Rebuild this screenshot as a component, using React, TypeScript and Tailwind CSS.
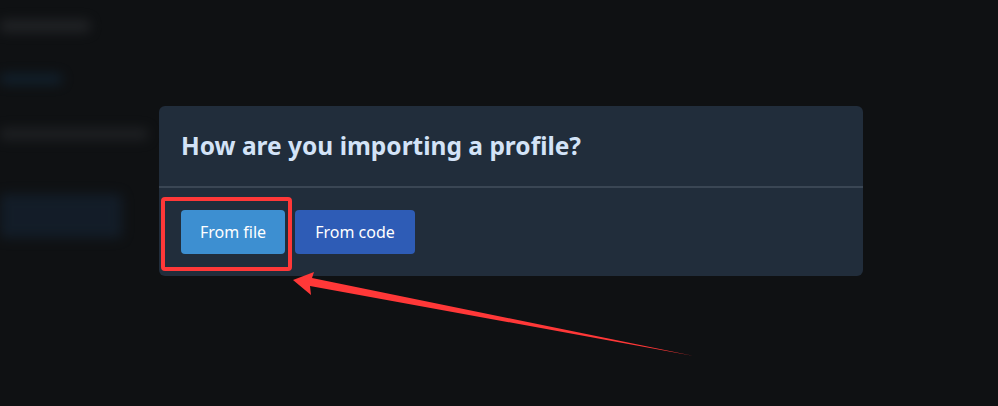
export default function App() {
    return (
        <div
            className="relative w-[998px] h-[406px] overflow-hidden bg-[#0f1113]"
            style={{ fontFamily: '"Noto Sans", "Open Sans", sans-serif' }}
        >
            {/* blurred page behind the modal */}
            <div className="flex flex-col items-start pt-[20px] blur-[6px] opacity-70">
                <div className="h-[12px] w-[90px] rounded bg-[#2a2c2f]" />
                <div className="mt-[42px] h-[10px] w-[62px] rounded bg-[#13283a]" />
                <div className="mt-[44px] h-[12px] w-[148px] rounded bg-[#25272a]" />
                <div className="mt-[54px] h-[44px] w-[122px] rounded bg-[#152231]" />
            </div>

            {/* modal */}
            <div className="absolute left-[159px] top-[106px] w-[704px] rounded-[6px] bg-[#212d3b]">
                <div className="h-[82px] flex items-center px-[22px] border-b-2 border-[#3a4654]">
                    <h2 className="text-[24.5px] font-bold text-[#d3e3f7]">
                        How are you importing a profile?
                    </h2>
                </div>
                <div className="flex gap-[10px] px-[22px] pt-[22px] pb-[22px]">
                    <button className="h-[44px] w-[104px] rounded-[4px] bg-[#3d8fd1] text-white text-[16px]">
                        From file
                    </button>
                    <button className="h-[44px] w-[120px] rounded-[4px] bg-[#2e5cb6] text-white text-[16px]">
                        From code
                    </button>
                </div>
            </div>

            {/* highlight box */}
            <div className="absolute left-[161px] top-[197px] w-[131px] h-[74px] rounded-[4px] border-[4px] border-[#ff3838]" />

            {/* arrow */}
            <svg className="absolute left-0 top-0" width="998" height="406" viewBox="0 0 998 406">
                <polygon
                    points="293,280 314,272 312,278 694,356 310,286 311,295"
                    fill="#ff3838"
                />
            </svg>
        </div>
    );
}
